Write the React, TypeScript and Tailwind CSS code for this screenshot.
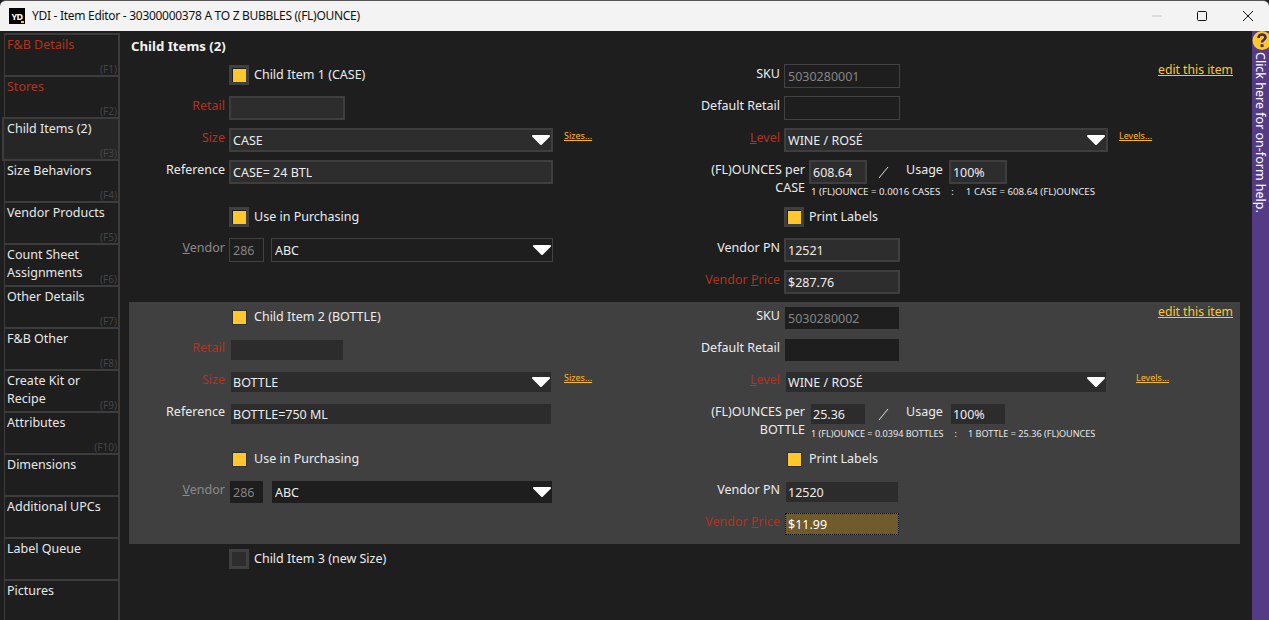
import React from "react";

const tabs: [string, string][] = [
  ["F&B Details", "(F1)"],
  ["Stores", "(F2)"],
  ["Child Items (2)", "(F3)"],
  ["Size Behaviors", "(F4)"],
  ["Vendor Products", "(F5)"],
  ["Count Sheet Assignments", "(F6)"],
  ["Other Details", "(F7)"],
  ["F&B Other", "(F8)"],
  ["Create Kit or Recipe", "(F9)"],
  ["Attributes", "(F10)"],
  ["Dimensions", ""],
  ["Additional UPCs", ""],
  ["Label Queue", ""],
  ["Pictures", ""],
];

function Tab({ label, fkey, index }: { label: string; fkey: string; index: number }) {
  const active = index === 2;
  const red = index < 2;
  return (
    <div
      className={
        "relative h-[42px] shrink-0 pt-[1px] leading-[18px] border-t-2 border-r-2 " +
        (active
          ? "-ml-[2px] pl-[3px] bg-[#262626] border-[#3c3c3c] border-l-2 border-b-2 -mb-[2px] z-10 h-[44px]"
          : "pl-[2px] border-l border-[#3c3c3c]") +
        (red ? " text-[#b0341e]" : " text-[#e8e8e8]")
      }
    >
      {label}
      {fkey && (
        <span className="absolute right-[1px] bottom-0 text-[10px] leading-[12px] text-[#454545]">{fkey}</span>
      )}
    </div>
  );
}

function Arrow() {
  return (
    <svg width="20" height="12" viewBox="0 0 20 12" className="ml-auto shrink-0">
      <path d="M2 2 H18 L10 10 Z" fill="#ffffff" stroke="#ffffff" strokeWidth="2" strokeLinejoin="round" />
    </svg>
  );
}

function Field({
  w,
  alt,
  thin,
  children,
  dim,
  select,
  focus,
}: {
  w: string;
  alt?: boolean;
  thin?: boolean;
  children?: React.ReactNode;
  dim?: boolean;
  select?: boolean;
  focus?: boolean;
}) {
  let cls = "";
  if (focus) cls = "border border-transparent bg-clip-padding bg-[#6f5b2b] pl-[3px] text-white";
  else if (thin)
    cls = alt
      ? "border border-transparent bg-clip-padding bg-[#1e1e1e] pl-[3px]"
      : "border border-[#424242] pl-[3px]";
  else
    cls = alt
      ? "border-2 border-transparent bg-clip-padding bg-[#2c2c2c] pl-[2px]"
      : "border-2 border-[#3e3e3e] bg-[#2d2d2d] pl-[2px]";
  return (
    <div
      className={
        "relative h-6 shrink-0 flex items-center " +
        w +
        " " +
        cls +
        (dim ? " text-[#858585]" : focus ? "" : " text-[#ececec]")
      }
    >
      {focus && <div className="absolute inset-0 border border-dotted border-black" />}
      <span className="truncate pt-[2px]">{children}</span>
      {select && <Arrow />}
    </div>
  );
}

function Check({ alt, on = true }: { alt?: boolean; on?: boolean }) {
  return (
    <div
      className={
        "-mt-[2px] w-5 h-5 shrink-0 flex items-center justify-center border-[3px] " +
        (alt ? "border-transparent" : "border-[#404040]") +
        (on || alt ? "" : " bg-[#2d2d2d]")
      }
    >
      {on && (
        <div
          className={
            "w-[13px] h-[13px] bg-[#ffc72c] " +
            (alt ? "outline-1 outline-[#303030]" : "")
          }
        />
      )}
    </div>
  );
}

function CheckText({ children }: { children: React.ReactNode }) {
  return <span className="ml-[1px] -mt-[2px] text-[#ececec]">{children}</span>;
}

function Label({ w, red, dim, children }: { w: string; red?: boolean; dim?: boolean; children: React.ReactNode }) {
  return (
    <div
      className={
        "shrink-0 -mt-[4px] text-right " +
        w +
        (red ? " text-[#b0341e]" : dim ? " text-[#8a8a8a]" : " text-[#ececec]")
      }
    >
      {children}
    </div>
  );
}

function Row({ children, h = "h-8" }: { children: React.ReactNode; h?: string }) {
  return <div className={"flex gap-1 " + h}>{children}</div>;
}

function Box({ children }: { children: React.ReactNode }) {
  return <div className="flex items-center gap-1 h-6">{children}</div>;
}

function Link({ children, className }: { children: React.ReactNode; className: string }) {
  return <span className={"underline text-[#ffb81c] text-[9px] leading-[12px] -mt-[8px] shrink-0 " + className}>{children}</span>;
}

type P = {
  alt?: boolean;
  title: string;
  size: string;
  reference: string;
  sku: string;
  per: string;
  qty: string;
  pn: string;
  price: string;
  vendorNote: React.ReactNode;
  levelsClass: string;
};

function Panel({ alt, title, size, reference, sku, per, qty, pn, price, vendorNote, levelsClass }: P) {
  return (
    <section className={"ml-[9px] w-[1111px] h-[242px] pt-1 flex " + (alt ? "bg-[#404040]" : "")}>
      <div className="w-[551px] shrink-0">
        <Row>
          <Box>
            <div className="w-[96px]" />
            <Check alt={alt} />
            <CheckText>{title}</CheckText>
          </Box>
        </Row>
        <Row>
          <Box>
            <Label w="w-[96px]" red>Retail</Label>
            <Field w="w-[116px]" alt={alt} />
          </Box>
        </Row>
        <Row>
          <Box>
            <Label w="w-[96px]" red>Size</Label>
            <Field w="w-[324px]" alt={alt} select>{size}</Field>
            <Link className="ml-[7px]">Sizes...</Link>
          </Box>
        </Row>
        <Row h="h-[46px]">
          <Box>
            <Label w="w-[96px]">Reference</Label>
            <Field w="w-[324px]" alt={alt}>{reference}</Field>
          </Box>
        </Row>
        <Row>
          <Box>
            <div className="w-[96px]" />
            <Check alt={alt} />
            <CheckText>Use in Purchasing</CheckText>
          </Box>
        </Row>
        <Row>
          <Box>
            <Label w="w-[96px]" dim><span className="underline">V</span>endor</Label>
            <Field w="w-[35px]" thin alt={alt} dim>286</Field>
            <Field w="w-[282px] ml-[3px]" thin alt={alt} select>ABC</Field>
          </Box>
        </Row>
      </div>
      <div className="flex-1">
        <Row>
          <Box>
            <Label w="w-[100px]">SKU</Label>
            <Field w="w-[116px]" thin alt={alt} dim>{sku}</Field>
          </Box>
          <span className="ml-auto mr-[7px] -mt-[2px] h-[15px] leading-[15px] underline text-[12.2px] text-[#ffc72c]">edit this item</span>
        </Row>
        <Row>
          <Box>
            <Label w="w-[100px]">Default Retail</Label>
            <Field w="w-[116px]" thin alt={alt} />
          </Box>
        </Row>
        <Row>
          <Box>
            <Label w="w-[100px]" red><span className="underline">L</span>evel</Label>
            <Field w="w-[324px]" alt={alt} select>WINE / ROSÉ</Field>
            <Link className={levelsClass}>Levels...</Link>
          </Box>
        </Row>
        <Row h="h-[46px]">
          <div className="w-[125px] shrink-0 pt-[1px] text-right leading-[18px] text-[#ececec]">
            <div>(FL)OUNCES per</div>
            <div>{per}</div>
          </div>
          <div>
            <div className="flex items-center h-6">
              <Field w="w-[58px]" alt={alt}>{qty}</Field>
              <svg width="12" height="14" viewBox="0 0 12 14" className="ml-[11px]">
                <path d="M1 13 L10 2" stroke="#e0e0e0" strokeWidth="1" fill="none" />
              </svg>
              <span className="ml-[16px] -mt-[4px] text-[#ececec]">Usage</span>
              <Field w="w-[58px] ml-[6px]" alt={alt}>100%</Field>
            </div>
            {vendorNote}
          </div>
        </Row>
        <Row>
          <Box>
            <div className="w-[100px]" />
            <Check alt={alt} />
            <CheckText>Print Labels</CheckText>
          </Box>
        </Row>
        <Row>
          <Box>
            <Label w="w-[100px]">Vendor PN</Label>
            <Field w="w-[116px]" alt={alt}>{pn}</Field>
          </Box>
        </Row>
        <Row>
          <Box>
            <Label w="w-[100px]" red>Vendor <span className="underline">P</span>rice</Label>
            <Field w="w-[116px]" alt={alt} focus={alt}>{price}</Field>
          </Box>
        </Row>
      </div>
    </section>
  );
}

function Note({ a, b, gap, size }: { a: string; b: string; gap: string; size: string }) {
  return (
    <div className={"mt-[2px] ml-[2px] flex leading-[12px] text-[#e8e8e8] whitespace-nowrap " + size}>
      <span>{a}</span>
      <span className={gap}>:</span>
      <span>{b}</span>
    </div>
  );
}

export default function App() {
  return (
    <div
      className="w-[1269px] h-[620px] overflow-hidden flex flex-col bg-[#1e1e1e] text-[12.5px]"
      style={{ fontFamily: '"Noto Sans", "Open Sans", sans-serif' }}
    >
      <header className="h-[31px] shrink-0 bg-[#f3f3f3] border-t border-[#555] flex items-center pl-[9px] rounded-t-[6px]">
        <div className="relative w-4 h-4 bg-black shrink-0 flex items-center justify-center">
          <span className="text-white text-[9px] font-bold leading-none tracking-[-0.5px]">YD</span>
          <span className="absolute right-[1px] bottom-[1px] w-[3px] h-[2px] bg-[#ffc72c]" />
        </div>
        <span className="ml-[7px] text-[12px] tracking-[-0.29px] text-[#111]">YDI - Item Editor - 30300000378 A TO Z BUBBLES ((FL)OUNCE)</span>
        <div className="ml-auto flex items-center">
          <svg width="12" height="12" viewBox="0 0 12 12" className="mr-[33px]"><path d="M1 6 H11" stroke="#c4c4c4" strokeWidth="1" /></svg>
          <svg width="12" height="12" viewBox="0 0 12 12" className="mr-[34px]"><rect x="1.5" y="1.5" width="9" height="9" rx="1" fill="none" stroke="#111" strokeWidth="1" /></svg>
          <svg width="12" height="12" viewBox="0 0 12 12" className="mr-[15px]"><path d="M1 1 L11 11 M11 1 L1 11" stroke="#111" strokeWidth="1" /></svg>
        </div>
      </header>
      <div className="flex flex-1 min-h-0">
        <nav className="w-[120px] shrink-0 pl-1 pt-[2px] flex flex-col">
          {tabs.map(([l, f], i) => (
            <Tab key={l} label={l} fkey={f} index={i} />
          ))}
        </nav>
        <main className="flex-1 min-w-0">
          <h1 className="ml-[11px] mt-[6px] h-[23px] leading-[18px] font-bold text-[#f2f2f2] text-[13.2px]">Child Items (2)</h1>
          <Panel
            title="Child Item 1 (CASE)"
            size="CASE"
            reference="CASE= 24 BTL"
            sku="5030280001"
            per="CASE"
            qty="608.64"
            pn="12521"
            price="$287.76"
            levelsClass="ml-[7px]"
            vendorNote={<Note size="text-[9.7px]" a="1 (FL)OUNCE = 0.0016 CASES" b="1 CASE = 608.64 (FL)OUNCES" gap="ml-[11px] mr-[12px]" />}
          />
          <Panel
            alt
            title="Child Item 2 (BOTTLE)"
            size="BOTTLE"
            reference="BOTTLE=750 ML"
            sku="5030280002"
            per="BOTTLE"
            qty="25.36"
            pn="12520"
            price="$11.99"
            levelsClass="ml-[24px]"
            vendorNote={<Note size="text-[9.1px]" a="1 (FL)OUNCE = 0.0394 BOTTLES" b="1 BOTTLE = 25.36 (FL)OUNCES" gap="mx-[11px]" />}
          />
          <div className="ml-[9px] pt-1 flex items-center h-7">
            <div className="w-[100px]" />
            <Check on={false} />
            <span className="ml-[5px] -mt-[2px] text-[#ececec]">Child Item 3 (new Size)</span>
          </div>
        </main>
        <aside className="relative w-[17px] shrink-0 bg-[#553a85] overflow-hidden">
          <svg width="20" height="20" viewBox="0 0 20 20" className="absolute left-0 top-0">
            <circle cx="10" cy="9.5" r="9.5" fill="#ffc72c" />
            <path d="M6.5 7 C6.5 4.6 8 3.5 10 3.5 C12 3.5 13.5 4.7 13.5 6.6 C13.5 8.6 10 9 10 11.5" fill="none" stroke="#3d2a66" strokeWidth="2.6" />
            <rect x="8.6" y="13.2" width="2.9" height="2.9" fill="#3d2a66" />
          </svg>
          <div className="absolute left-0 top-[21px] w-[17px] [writing-mode:vertical-rl] whitespace-nowrap text-white leading-[17px]">Click here for on-form help.</div>
        </aside>
      </div>
    </div>
  );
}
